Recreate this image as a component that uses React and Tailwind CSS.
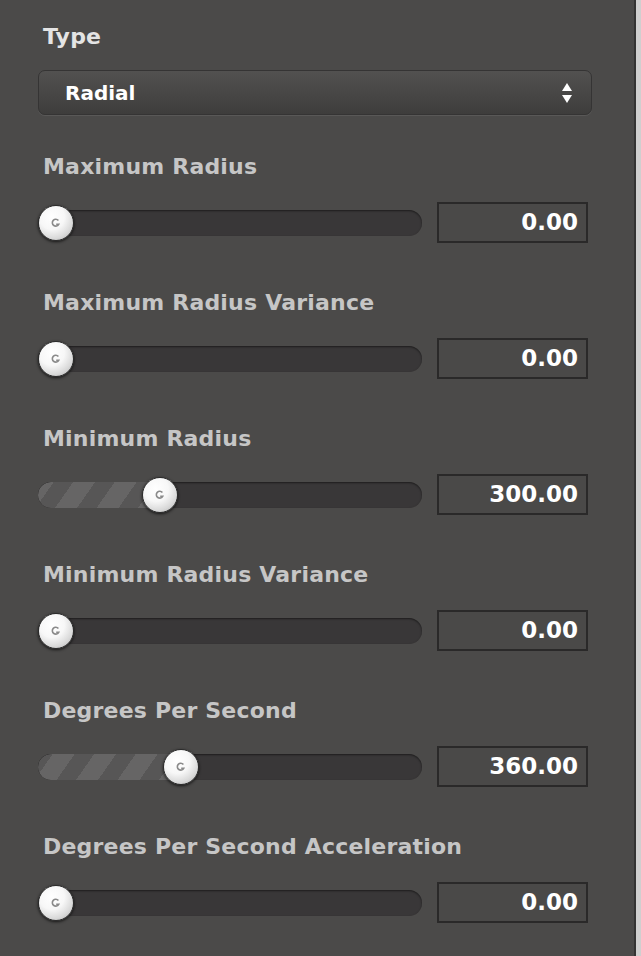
import React from "react";

const fields = [
  { label: "Maximum Radius", value: 0 },
  { label: "Maximum Radius Variance", value: 0 },
  { label: "Minimum Radius", value: 300 },
  { label: "Minimum Radius Variance", value: 0 },
  { label: "Degrees Per Second", value: 360 },
  { label: "Degrees Per Second Acceleration", value: 0 },
];

const MAX = 1000;
const TRACK = 384;
const KNOB = 36;

const Knob = () => (
  <div className="w-[36px] h-[36px] rounded-full border border-[#2b2b2b] bg-[radial-gradient(circle_at_38%_32%,#ffffff_0%,#f7f7f7_40%,#d8d8d8_70%,#a0a0a0_100%)] shadow-[0_1px_3px_rgba(0,0,0,0.7)] flex items-center justify-center">
    <svg width="12" height="12" viewBox="0 0 12 12">
      <path d="M8.4 3.6 A3.4 3.4 0 1 0 8.8 7.2 L6.2 7.2" fill="none" stroke="#8a8a8a" strokeWidth="1.6" />
    </svg>
  </div>
);

const Slider = ({ value }) => {
  const left = (value / MAX) * (TRACK - KNOB);
  return (
    <div className="relative w-[384px] h-[42px] flex items-center">
      <div className="w-full h-[26px] rounded-full bg-[#393738] shadow-[inset_0_1px_2px_rgba(0,0,0,0.5)] overflow-hidden">
        {value > 0 && (
          <div
            className="h-full rounded-l-full bg-[repeating-linear-gradient(-55deg,#666565_0px,#666565_18px,#575656_18px,#575656_34px)]"
            style={{ width: left + KNOB / 2 }}
          />
        )}
      </div>
      <div className="absolute top-[3px]" style={{ left }}>
        <Knob />
      </div>
    </div>
  );
};

export default function App() {
  return (
    <div className="flex w-[641px] h-[956px] bg-[#4b4a49] font-['DejaVu_Sans',sans-serif]">
      <div className="flex-1 border-r-2 border-[#343333] pl-[38px] pt-[22px]">
        <div className="h-[30px] leading-[30px] pl-[5px] text-[22px] tracking-[0.2px] font-bold text-[#e4e4e4]">Type</div>
        <div className="mt-[18px] w-[554px] h-[45px] rounded-[7px] border border-[#353434] bg-[linear-gradient(#525150,#3e3d3c)] shadow-[0_1px_0_rgba(255,255,255,0.08)] flex items-center justify-between pl-[26px] pr-[18px]">
          <span className="text-[20px] font-bold text-white">Radial</span>
          <svg width="12" height="22" viewBox="0 0 12 22">
            <path d="M6 1 L11 9 L1 9 Z" fill="#ffffff" />
            <path d="M6 21 L11 13 L1 13 Z" fill="#ffffff" />
          </svg>
        </div>
        <div className="mt-[37px] flex flex-col gap-[45px]">
          {fields.map((f) => (
            <div key={f.label}>
              <div className="h-[30px] leading-[30px] pl-[5px] text-[22px] tracking-[0.2px] font-bold text-[#c6c6c6]">{f.label}</div>
              <div className="mt-[20px] h-[41px] flex items-center">
                <Slider value={f.value} />
                <div className="ml-[15px] w-[151px] h-[41px] border-2 border-[#2a2929] bg-[#4a4948] flex items-center justify-end pr-[8px] text-[23px] font-bold text-white">
                  {f.value.toFixed(2)}
                </div>
              </div>
            </div>
          ))}
        </div>
      </div>
      <div className="w-[5px] bg-[#cfcfcf]" />
    </div>
  );
}
